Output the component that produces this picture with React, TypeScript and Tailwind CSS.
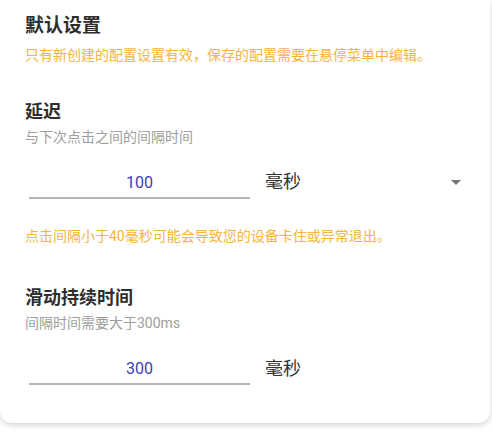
import { useState } from "react";

const font = { fontFamily: '"Roboto", "Noto Sans CJK SC", sans-serif' };

function NumberField({ value, onChange }: { value: string; onChange: (v: string) => void }) {
  return (
    <input
      value={value}
      onChange={(e) => onChange(e.target.value)}
      className="ml-[4px] h-[32px] w-[221px] border-b-2 border-[#b3b3b3] bg-transparent text-center text-[16px] text-[#3d3db8] outline-none"
      style={font}
    />
  );
}

export default function App() {
  const [delay, setDelay] = useState("100");
  const [swipe, setSwipe] = useState("300");

  return (
    <div className="min-h-[434px] bg-white pr-[2px]" style={font}>
      <div className="w-[490px] rounded-b-[12px] bg-white px-[25px] pt-[13px] pb-[38px] shadow-[0_2px_6px_rgba(0,0,0,0.18)]">
        <h1 className="text-[19px] leading-[26px] font-bold text-[#2e2e2e]">默认设置</h1>
        <p className="mt-[6px] text-[14px] leading-[20px] text-[#f5b43c]">
          只有新创建的配置设置有效，保存的配置需要在悬停菜单中编辑。
        </p>

        {/* 延迟 */}
        <h2 className="mt-[35px] text-[18px] leading-[24px] font-bold text-[#2e2e2e]">延迟</h2>
        <p className="mt-[3px] text-[14px] leading-[20px] text-[#9e9e9e]">与下次点击之间的间隔时间</p>
        <div className="mt-[20px] flex items-center">
          <NumberField value={delay} onChange={setDelay} />
          <div className="ml-[15px] flex flex-1 items-center justify-between pb-[3px]">
            <span className="text-[18px] text-[#333]">毫秒</span>
            <svg width="24" height="24" viewBox="0 0 24 24" className="-mr-[3px] fill-[#757575]">
              <path d="M7 10l5 5 5-5z" />
            </svg>
          </div>
        </div>
        <p className="mt-[27px] text-[14px] leading-[20px] text-[#f5b43c]">
          点击间隔小于40毫秒可能会导致您的设备卡住或异常退出。
        </p>

        {/* 滑动持续时间 */}
        <h2 className="mt-[40px] text-[18px] leading-[24px] font-bold text-[#2e2e2e]">滑动持续时间</h2>
        <p className="mt-[3px] text-[14px] leading-[20px] text-[#9e9e9e]">间隔时间需要大于300ms</p>
        <div className="mt-[20px] flex items-center">
          <NumberField value={swipe} onChange={setSwipe} />
          <span className="ml-[15px] pb-[2px] text-[18px] text-[#333]">毫秒</span>
        </div>
      </div>
    </div>
  );
}
